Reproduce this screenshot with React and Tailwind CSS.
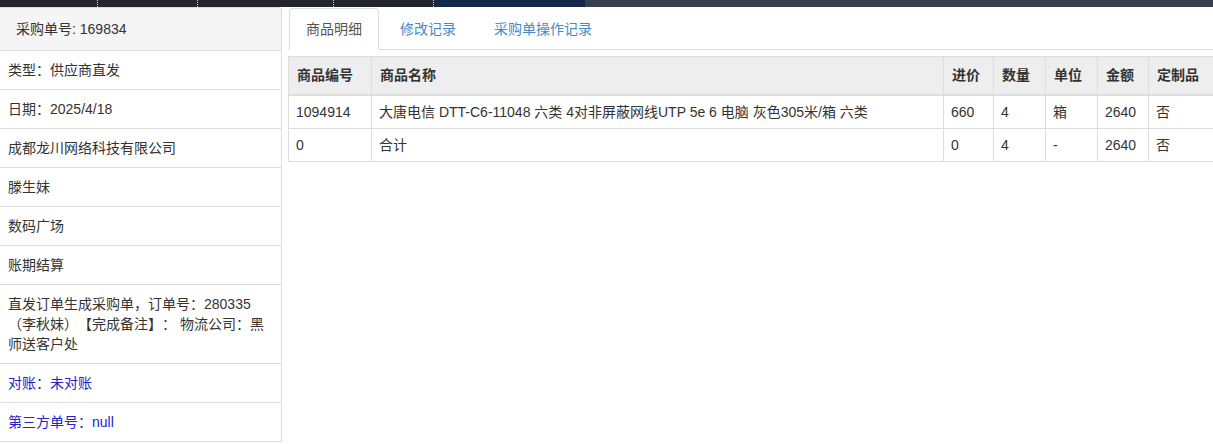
import React from "react";

const font = { fontFamily: '"Liberation Sans", Arial, "Noto Sans CJK SC", sans-serif' };

const rows = [
  { text: "类型：供应商直发" },
  { text: "日期：2025/4/18" },
  { text: "成都龙川网络科技有限公司" },
  { text: "滕生妹" },
  { text: "数码广场" },
  { text: "账期结算" },
  { text: "直发订单生成采购单，订单号：280335（李秋妹）【完成备注】： 物流公司：黑师送客户处" },
  { text: "对账：未对账", blue: true },
  { text: "第三方单号：null", blue: true },
];

const cols = [
  { h: "商品编号", w: "w-[83px]" },
  { h: "商品名称", w: "w-[572px]" },
  { h: "进价", w: "w-[50px]" },
  { h: "数量", w: "w-[52px]" },
  { h: "单位", w: "w-[52px]" },
  { h: "金额", w: "w-[51px]" },
  { h: "定制品", w: "w-[70px]" },
];

const body = [
  ["1094914", "大唐电信 DTT-C6-11048 六类 4对非屏蔽网线UTP 5e 6 电脑 灰色305米/箱 六类", "660", "4", "箱", "2640", "否"],
  ["0", "合计", "0", "4", "-", "2640", "否"],
];

export default function App() {
  return (
    <div className="w-[1213px] h-[444px] overflow-hidden bg-white text-[14px] leading-[20px] text-[#333] [text-spacing-trim:space-all]" style={font}>
      <div className="flex h-[7px]">
        <div className="w-[98px] bg-[#23262e] border-r border-dotted border-white/80" />
        <div className="w-[100px] bg-[#23262e] border-r border-dotted border-white/80" />
        <div className="w-[136px] bg-[#23262e] border-r border-dotted border-white/80" />
        <div className="w-[100px] bg-[#23262e] border-r border-dotted border-white/80" />
        <div className="w-[151px] bg-[#14284a]" />
        <div className="flex-1 bg-[#36414d]" />
      </div>
      <div className="flex">
        <div className="w-[282px] shrink-0">
          <div className="border-r border-t border-b border-[#ddd] rounded-tr-[4px] bg-[#f5f5f5] h-[44px] flex items-center pl-[16px]">
            采购单号: 169834
          </div>
          {rows.map((r, i) => (
            <div
              key={i}
              className={`border-r border-b border-[#ddd] py-[9px] pl-[8px] pr-[10px] ${r.blue ? "text-[#2323c9]" : ""}`}
            >
              {r.text}
            </div>
          ))}
        </div>
        <div className="flex-1 ml-[6px] overflow-hidden">
          <div className="flex border-b border-[#ddd] h-[43px] pt-[1px]">
            <div className="ml-[1px] px-[16px] border border-[#ddd] border-b-white rounded-t-[4px] bg-white text-[#555] h-[42px] flex items-center">
              商品明细
            </div>
            <div className="ml-[4px] px-[17px] flex items-center text-[#428bca] h-[41px]">修改记录</div>
            <div className="ml-[4px] px-[17px] flex items-center text-[#428bca] h-[41px]">采购单操作记录</div>
          </div>
          <table className="mt-[6px] table-fixed border-collapse w-[930px]">
            <thead>
              <tr className="bg-[#eeeeee]">
                {cols.map((c) => (
                  <th
                    key={c.h}
                    className={`${c.w} text-left font-bold border border-[#ddd] border-b-2 px-[8px] pt-[8px] pb-[9px]`}
                  >
                    {c.h}
                  </th>
                ))}
              </tr>
            </thead>
            <tbody>
              {body.map((r, i) => (
                <tr key={i}>
                  {r.map((c, j) => (
                    <td key={j} className="border border-[#ddd] px-[7px] py-[6px] whitespace-nowrap overflow-hidden">
                      {c}
                    </td>
                  ))}
                </tr>
              ))}
            </tbody>
          </table>
        </div>
      </div>
    </div>
  );
}
